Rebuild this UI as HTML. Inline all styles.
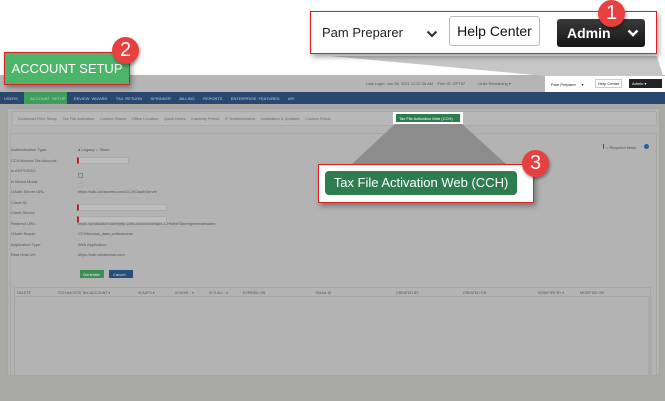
<!DOCTYPE html>
<html><head><style>
*{margin:0;padding:0;box-sizing:border-box}
body{width:665px;height:401px;position:relative;overflow:hidden;background:#fff;font-family:"Liberation Sans",sans-serif}
.a{position:absolute}
.t{font-size:4px;color:#555;white-space:nowrap}
.badge{position:absolute;width:27px;height:27px;border-radius:50%;background:#e8403f;color:#fff;font-size:20px;text-align:center;line-height:27px;box-shadow:1px 2px 3px rgba(0,0,0,.4)}
</style></head><body>
<div class="a" style="left:0;top:75px;width:665px;height:326px;background:#a8a9a4"></div>
<div class="a" style="left:0;top:75px;width:665px;height:17px;background:#b5b5b5"></div>
<div class="a t" style="left:366px;top:81px">Last Login: Jan 06, 2021 11:22:38 AM &nbsp;&nbsp; Firm ID: SPT57 &nbsp;&nbsp;&nbsp;&nbsp;&nbsp;&nbsp;&nbsp;&nbsp;&nbsp;&nbsp; Units Remaining ▾</div>
<div class="a" style="left:545px;top:76px;width:120px;height:16px;background:#fff"></div>
<div class="a t" style="left:551px;top:82px;color:#222">Pam Preparer &nbsp;&nbsp;&nbsp;&nbsp;▾</div>
<div class="a t" style="left:595px;top:79px;border:1px solid #ccc;padding:1px 2px;color:#222">Help Center</div>
<div class="a t" style="left:629px;top:79px;width:33px;height:9px;background:#222;color:#fff;padding:2px 3px">Admin ▾</div>
<div class="a" style="left:0;top:92px;width:665px;height:12px;background:#2a4770"></div>
<div class="a" style="left:24px;top:92px;width:43px;height:12px;background:#3f9e5c"></div>
<div class="a t" style="left:4px;top:96px;color:#c5ccd8;word-spacing:1px">USERS &nbsp;&nbsp;&nbsp;&nbsp; ACCOUNT SETUP &nbsp;&nbsp; REVIEW WIZARD &nbsp;&nbsp; TAX RETURN &nbsp;&nbsp; SPRINKER &nbsp;&nbsp; BILLING &nbsp;&nbsp; REPORTS &nbsp;&nbsp; ENTERPRISE FEATURES &nbsp;&nbsp; API</div>
<div class="a" style="left:7px;top:108px;width:653px;height:268px;background:#b3b3b3;border:1px solid #a5a5a5"></div>
<div class="a" style="left:12px;top:111px;width:645px;height:15px;background:#b8b8b8;border:1px solid #aaa"></div>
<div class="a t" style="left:18px;top:116px;color:#5b7a5b">Download Files Setup &nbsp;&nbsp;&nbsp; Tax File Activation &nbsp;&nbsp;&nbsp; Custom Status &nbsp;&nbsp;&nbsp; Office Location &nbsp;&nbsp;&nbsp; Quick Notes &nbsp;&nbsp;&nbsp; Inactivity Period &nbsp;&nbsp;&nbsp; IP Authentication &nbsp;&nbsp;&nbsp; Installation &amp; Updates &nbsp;&nbsp;&nbsp; Custom Fields</div>
<div class="a" style="left:393px;top:112px;width:70px;height:12px;background:#fff"></div>
<div class="a t" style="left:396px;top:114px;width:64px;height:8px;background:#2e7d4f;color:#fff;padding:2px 3px">Tax File Activation Web (CCH)</div>
<div class="a" style="left:10px;top:133px;width:647px;height:243px;background:#b3b3b3;border:1px solid #a8a8a8"></div>
<div class="a t" style="left:11px;top:145px;line-height:10.5px">Authentication Type:<br>CCH Axcess Tax Account:<br>Is ADFS/SSO:<br>Is Mixed Mode:<br>OAuth Server URL:<br>Client ID:<br>Client Secret:<br>Redirect URL:<br>OAuth Scope:<br>Application Type:<br>Rest Host Url:</div>
<div class="a t" style="left:78px;top:145px;line-height:10.5px">● Legacy ○ Token<br><br><br><br>https://sdk.cchaxcess.com/CCHOauthServer<br><br><br>https://production.sureprep.com/AccountSetup/CCHWebToken/generatetoken<br>CCHAxcess_data_writeaccess<br>Web Application<br>https://sdk.cchaxcess.com</div>
<div class="a" style="left:77px;top:157px;width:52px;height:7px;background:#bdbdbd;border:1px solid #aaa;border-left:2px solid #b22"></div>
<div class="a" style="left:78px;top:173px;width:5px;height:5px;border:1px solid #888"></div>
<div class="a" style="left:78px;top:183px;width:5px;height:5px;border:1px solid #aaa"></div>
<div class="a" style="left:77px;top:204px;width:90px;height:7px;background:#bdbdbd;border:1px solid #aaa;border-left:2px solid #b22"></div>
<div class="a" style="left:77px;top:216px;width:90px;height:7px;background:#bdbdbd;border:1px solid #aaa;border-left:2px solid #b22"></div>
<div class="a t" style="left:80px;top:270px;width:24px;height:8px;background:#3d8f55;color:#eee;padding:2px 3px">Generate</div>
<div class="a t" style="left:109px;top:270px;width:24px;height:8px;background:#294d79;color:#ddd;padding:2px 4px">Cancel</div>
<div class="a" style="left:603px;top:144px;width:1px;height:5px;background:#b22"></div>
<div class="a t" style="left:606px;top:145px">= Required fields</div>
<div class="a" style="left:644px;top:144px;width:5px;height:5px;border-radius:50%;background:#2b5fa0"></div>
<div class="a" style="left:14px;top:287px;width:637px;height:89px;background:#b3b3b3;border:1px solid #a6a6a6"></div>
<div class="a" style="left:14px;top:287px;width:637px;height:10px;border-bottom:1px solid #a6a6a6"></div>
<div class="a t" style="left:17px;top:291px;font-size:3.6px">DELETE</div>
<div class="a t" style="left:58px;top:291px;font-size:3.6px">CCH AXCESS TAX ACCOUNT ▾</div>
<div class="a t" style="left:138px;top:291px;font-size:3.6px">IS ADFS ▾</div>
<div class="a t" style="left:175px;top:291px;font-size:3.6px">IS MIXE... ▾</div>
<div class="a t" style="left:209px;top:291px;font-size:3.6px">IS O AU... ▾</div>
<div class="a t" style="left:243px;top:291px;font-size:3.6px">EXPIRED ON</div>
<div class="a t" style="left:316px;top:291px;font-size:3.6px">EMAIL ID</div>
<div class="a t" style="left:396px;top:291px;font-size:3.6px">CREATED BY</div>
<div class="a t" style="left:463px;top:291px;font-size:3.6px">CREATED ON</div>
<div class="a t" style="left:538px;top:291px;font-size:3.6px">MODIFIED BY ▾</div>
<div class="a t" style="left:580px;top:291px;font-size:3.6px">MODIFIED ON</div>
<div class="a" style="left:648px;top:297px;width:4px;height:79px;background:#a9a9a9"></div>
<svg class="a" style="left:0;top:0" width="665" height="401"><polygon points="330,56 657,56 663,76 545,76" fill="#c6c6c6"/><polygon points="352,164 395,124 462,124 506,164" fill="#8c8c8c"/></svg>
<div class="a" style="left:310px;top:11px;width:347px;height:43px;background:#fff;border:1.5px solid #e02020;box-shadow:2px 3px 5px rgba(0,0,0,.35)"></div>
<div class="a" style="left:322px;top:25px;color:#222;font-size:13px">Pam Preparer</div>
<svg class="a" style="left:426px;top:30px" width="12" height="8"><path d="M1.5 1.5 L6 6 L10.5 1.5" stroke="#333" stroke-width="2.2" fill="none"/></svg>
<div class="a" style="left:449px;top:16px;width:91px;height:30px;border:1px solid #bbb;border-radius:3px;font-size:14px;color:#111;text-align:center;line-height:28px">Help Center</div>
<div class="a" style="left:557px;top:19px;width:88px;height:28px;border-radius:3px;background:linear-gradient(#3a3a3a,#151515);color:#fff;font-size:14px;font-weight:bold;line-height:28px;padding-left:10px">Admin</div>
<svg class="a" style="left:627px;top:29px" width="12" height="8"><path d="M1.5 1.5 L6 6 L10.5 1.5" stroke="#fff" stroke-width="2.4" fill="none"/></svg>
<div class="badge" style="left:598px;top:0px">1</div>
<div class="a" style="left:4px;top:52px;width:126px;height:33px;background:#4db56a;border:1.5px solid #e02020;box-shadow:2px 3px 5px rgba(0,0,0,.35);color:#fff;font-size:13px;line-height:31px;text-align:center">ACCOUNT SETUP</div>
<div class="badge" style="left:112px;top:37px">2</div>
<div class="a" style="left:318px;top:164px;width:216px;height:39px;background:#fff;border:1.5px solid #e02020;box-shadow:2px 3px 5px rgba(0,0,0,.35)"></div>
<div class="a" style="left:325px;top:171px;width:192px;height:24px;border-radius:4px;background:#2e7d4f;color:#fff;font-size:13px;line-height:24px;text-align:center">Tax File Activation Web (CCH)</div>
<div class="badge" style="left:522px;top:150px">3</div>
</body></html>
